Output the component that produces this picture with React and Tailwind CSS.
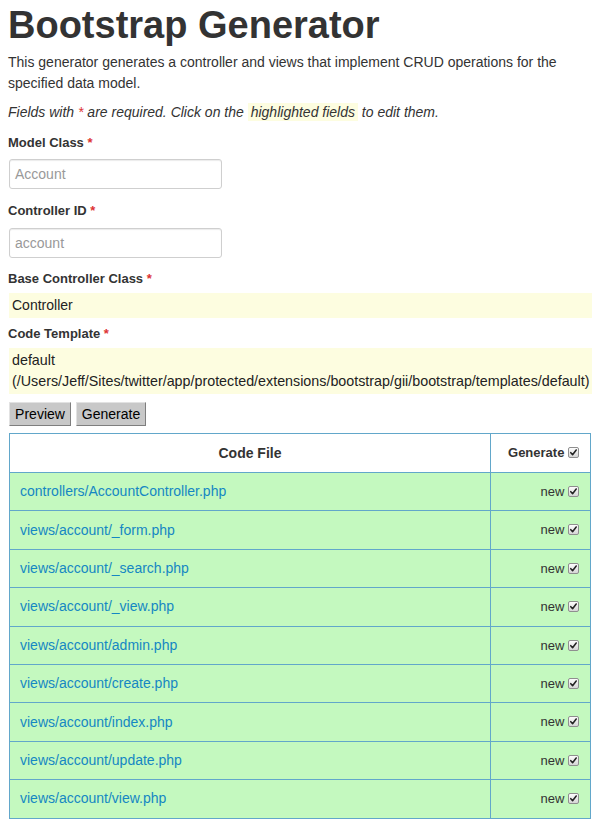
import React from 'react'

const files = [
  'controllers/AccountController.php',
  'views/account/_form.php',
  'views/account/_search.php',
  'views/account/_view.php',
  'views/account/admin.php',
  'views/account/create.php',
  'views/account/index.php',
  'views/account/update.php',
  'views/account/view.php',
]

function Check() {
  return (
    <span className="inline-block align-middle w-[11px] h-[11px] border border-[#8f8f8f] rounded-[2px] bg-gradient-to-b from-[#fdfdfd] to-[#d6d6d6] relative -top-[1px]">
      <svg viewBox="0 0 10 10" className="w-[9px] h-[9px] block">
        <path d="M2 5.2 L4 7.4 L8 2.2" fill="none" stroke="#222" strokeWidth="1.7" strokeLinecap="round" strokeLinejoin="round" />
      </svg>
    </span>
  )
}

function Label({ children }) {
  return (
    <div className="text-[13px] font-bold leading-[20px] text-[#333]">
      {children} <span className="text-[#d33]">*</span>
    </div>
  )
}

export default function App() {
  return (
    <div className="px-[8px] pt-[4px] font-['Liberation_Sans',Arial,sans-serif] text-[#333] bg-white min-h-[824px]">
      <h1 className="text-[38px] font-bold leading-[42px] text-[#333]">Bootstrap Generator</h1>
      <p className="mt-[6px] text-[14px] leading-[21px]">
        This generator generates a controller and views that implement CRUD operations for the specified data model.
      </p>
      <p className="mt-[8px] text-[14px] leading-[21px] italic">
        Fields with <span className="text-[#d33]">*</span> are required. Click on the{' '}
        <span className="bg-[#fdfde0] px-[3px] py-[1px]">highlighted fields</span> to edit them.
      </p>

      <div className="mt-[10px]"><Label>Model Class</Label></div>
      <div className="mt-[6px] ml-[1px] w-[213px] h-[30px] border border-[#cfcfcf] rounded-[3px] shadow-[inset_0_1px_1px_rgba(0,0,0,0.08)] px-[5px] flex items-center text-[14px] text-[#999]">
        Account
      </div>

      <div className="mt-[12px]"><Label>Controller ID</Label></div>
      <div className="mt-[7px] ml-[1px] w-[213px] h-[30px] border border-[#cfcfcf] rounded-[3px] shadow-[inset_0_1px_1px_rgba(0,0,0,0.08)] px-[5px] flex items-center text-[14px] text-[#999]">
        account
      </div>

      <div className="mt-[11px]"><Label>Base Controller Class</Label></div>
      <div className="mt-[4px] ml-[1px] h-[25px] bg-[#fdfde0] px-[3px] flex items-center text-[14px] text-[#222]">
        Controller
      </div>

      <div className="mt-[6px]"><Label>Code Template</Label></div>
      <div className="mt-[4px] ml-[1px] h-[46px] bg-[#fdfde0] px-[3px] pt-[2px] text-[14.3px] leading-[21px] text-[#222]">
        default
        <br />
        (/Users/Jeff/Sites/twitter/app/protected/extensions/bootstrap/gii/bootstrap/templates/default)
      </div>

      <div className="mt-[8px] ml-[1px] flex gap-[5px]">
        <button className="h-[24px] w-[62px] bg-[#c8c8c8] border border-t-[#e2e2e2] border-l-[#e2e2e2] border-r-[#7e7e7e] border-b-[#7e7e7e] text-[14px] text-black">
          Preview
        </button>
        <button className="h-[24px] w-[70px] bg-[#c8c8c8] border border-t-[#e2e2e2] border-l-[#e2e2e2] border-r-[#7e7e7e] border-b-[#7e7e7e] text-[14px] text-black">
          Generate
        </button>
      </div>

      <table className="mt-[7px] ml-[1px] w-[582px] border-collapse border border-[#62a7ca] text-[14px]">
        <thead>
          <tr className="h-[39px] bg-white">
            <th className="border border-[#62a7ca] text-center font-bold text-[#333]">Code File</th>
            <th className="border border-[#62a7ca] w-[100px] text-right pr-[11px] font-bold text-[13px] text-[#333]">
              Generate <Check />
            </th>
          </tr>
        </thead>
        <tbody>
          {files.map(f => (
            <tr key={f} className="h-[38.4px] bg-[#c4f9bf]">
              <td className="border border-[#62a7ca] pl-[10px] text-[#1587c3]">{f}</td>
              <td className="border border-[#62a7ca] text-right pr-[11px] text-[13px] text-[#333]">
                new <Check />
              </td>
            </tr>
          ))}
        </tbody>
      </table>
    </div>
  )
}
